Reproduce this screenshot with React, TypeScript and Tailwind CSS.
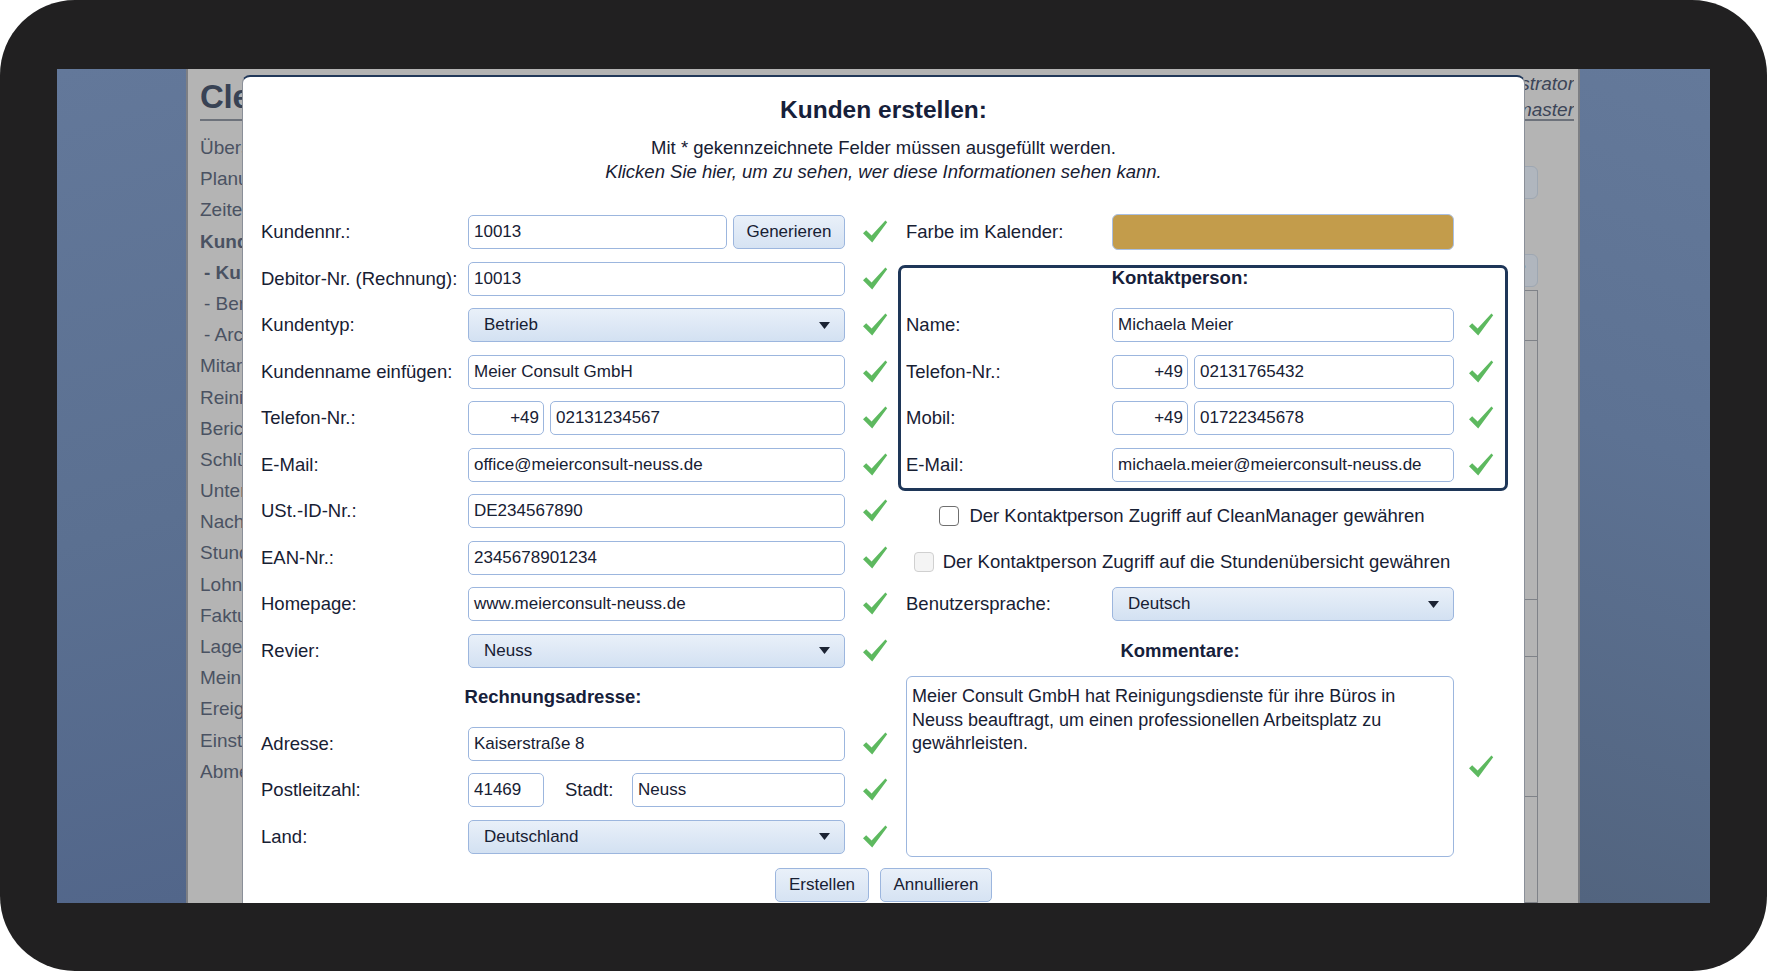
import React from "react";

const FONT = "font-['Liberation_Sans',Arial,Helvetica,sans-serif]";
const INK = "text-[#172033]";

function Check() {
  return (
    <svg viewBox="0 0 26 26" className="w-[26px] h-[26px] shrink-0">
      <path d="M1 14.2 L4.2 11.2 L9.6 16.6 L23.4 1.6 L25.2 3.2 L10.2 23.4 Z" fill="#5db95f" />
    </svg>
  );
}

function Field({ value, className = "" }: { value: string; className?: string }) {
  return (
    <div
      className={`h-[34px] shrink-0 flex items-center px-[5px] rounded-[5px] border border-[#9cb6de] bg-white text-[17px] ${INK} whitespace-nowrap overflow-hidden ${className}`}
    >
      {value}
    </div>
  );
}

function Prefix({ value }: { value: string }) {
  return (
    <div className={`h-[34px] w-[76px] shrink-0 flex items-center justify-end pr-[4px] rounded-[5px] border border-[#9cb6de] bg-white text-[17px] ${INK}`}>
      {value}
    </div>
  );
}

function Select({ value, className = "" }: { value: string; className?: string }) {
  return (
    <div
      className={`h-[34px] shrink-0 flex items-center justify-between pl-[15px] pr-[14px] rounded-[5px] border border-[#9cb6de] bg-gradient-to-b from-[#e9f0f9] to-[#d3e1f2] text-[17px] ${INK} ${className}`}
    >
      <span>{value}</span>
      <svg width="11" height="7" viewBox="0 0 11 7">
        <path d="M0 0H11L5.5 7Z" fill="#1b2333" />
      </svg>
    </div>
  );
}

function Label({ children, w = "w-[207px]" }: { children: React.ReactNode; w?: string }) {
  return <div className={`${w} shrink-0 text-[18.5px] ${INK} whitespace-nowrap`}>{children}</div>;
}

function LeftRow({ label, children, check = true }: { label: string; children: React.ReactNode; check?: boolean }) {
  return (
    <div className="h-[46.5px] flex items-center">
      <Label>{label}</Label>
      <div className="w-[377px] shrink-0 flex items-center">{children}</div>
      <div className="ml-[17px] w-[26px]">{check && <Check />}</div>
    </div>
  );
}

function ContactRow({ label, children }: { label: string; children: React.ReactNode }) {
  return (
    <div className="h-[46.5px] flex items-center pl-[5px]">
      <Label w="w-[206px]">{label}</Label>
      <div className="w-[342px] shrink-0 flex items-center">{children}</div>
      <div className="ml-[14px]">
        <Check />
      </div>
    </div>
  );
}

function Box({ disabled = false }: { disabled?: boolean }) {
  return (
    <div
      className={`w-[20px] h-[20px] shrink-0 rounded-[4px] border ${
        disabled ? "border-[#d0d0d0] bg-[#f4f4f4]" : "border-[#6f6f6f] bg-white"
      }`}
    />
  );
}

function BlueButton({ children, className = "" }: { children: React.ReactNode; className?: string }) {
  return (
    <div
      className={`h-[34px] shrink-0 flex items-center justify-center rounded-[5px] border border-[#9cb6de] bg-gradient-to-b from-[#e9f0f9] to-[#d6e3f3] text-[17px] ${INK} ${className}`}
    >
      {children}
    </div>
  );
}

const MENU: { text: string; bold?: boolean; sub?: boolean }[] = [
  { text: "Übersicht" },
  { text: "Planung" },
  { text: "Zeiterfassung" },
  { text: "Kunden", bold: true },
  { text: "- Kunden", bold: true, sub: true },
  { text: "- Bereiche", sub: true },
  { text: "- Archiv", sub: true },
  { text: "Mitarbeiter" },
  { text: "Reinigungspläne" },
  { text: "Berichte" },
  { text: "Schlüssel" },
  { text: "Unterlagen" },
  { text: "Nachrichten" },
  { text: "Stundenübersicht" },
  { text: "Lohnabrechnung" },
  { text: "Fakturierung" },
  { text: "Lager" },
  { text: "Mein Konto" },
  { text: "Ereignisse" },
  { text: "Einstellungen" },
  { text: "Abmelden" },
];

function AppPanel() {
  return (
    <div className="w-[1394px] shrink-0 h-full bg-[#b4b4b4] border-x-2 border-[#7d7f84] pl-[12px] pr-[4px] flex flex-col">
      {/* header: product name left, signed-in user right */}
      <div className="h-[50px] flex justify-between items-start">
        <div className="mt-[8px] w-[42px] overflow-hidden whitespace-nowrap h-[40px] leading-[40px] text-[33px] font-bold text-[#384254] tracking-[-0.3px]">
          CleanManager
        </div>
        <div className="pt-[2px] w-[50px] overflow-hidden flex flex-col items-end italic text-[19px] leading-[26px] text-[#3c4557] whitespace-nowrap">
          <div className="flex justify-end w-full">
            <span className="shrink-0">Administrator</span>
          </div>
          <div className="flex justify-end w-full">
            <span className="shrink-0">Cleanmaster</span>
          </div>
        </div>
      </div>
      <div className="h-[2px] bg-[#6d727b]" />
      <div className="flex-1 flex justify-between">
        <div className="mt-[11px] w-[42px] overflow-hidden flex flex-col">
          {MENU.map((m) => (
            <div
              key={m.text}
              className={`h-[31.2px] leading-[31.2px] whitespace-nowrap text-[19px] text-[#4a5262] ${
                m.bold ? "font-bold text-[#3a4354]" : ""
              } ${m.sub ? "pl-[4px]" : ""}`}
            >
              {m.text}
            </div>
          ))}
        </div>
        <div className="w-[420px] mr-[36px] flex flex-col items-end">
          <div className="mt-[45px] h-[33px] w-[160px] rounded-[6px] border border-[#9ea7b2] bg-[#b0b6be]" />
          <div className="mt-[55px] h-[33px] w-[160px] rounded-[6px] border border-[#9ea7b2] bg-[#b0b6be] flex items-center justify-end pr-[11px] text-[#3c4557] font-bold text-[18px]">
            ?
          </div>
          <div className="mt-[3px] w-full flex-1 border border-[#7f8288] flex flex-col">
            <div className="h-[50px] border-b border-[#7f8288]" />
            <div className="h-[259px] border-b border-[#7f8288]" />
            <div className="h-[57px] border-b border-[#7f8288]" />
            <div className="h-[140px] border-b border-[#7f8288]" />
          </div>
        </div>
      </div>
    </div>
  );
}

function Dialog() {
  return (
    <div className="absolute left-[185px] top-[6px] w-[1283px] h-[860px] bg-white rounded-t-[8px] border-t-2 border-x border-t-[#21385a] border-x-[#8a8f98]">
      <div className="pt-[18px] h-[48px] text-center text-[24.5px] leading-[30px] font-bold text-[#16203a]">
        Kunden erstellen:
      </div>
      <div className={`mt-[11px] text-center text-[18.5px] leading-[24px] ${INK}`}>
        <div>Mit * gekennzeichnete Felder müssen ausgefüllt werden.</div>
        <div className="italic">Klicken Sie hier, um zu sehen, wer diese Informationen sehen kann.</div>
      </div>

      <div className="mt-[24.75px] pl-[18px] flex gap-[11px]">
        {/* left column */}
        <div className="w-[626px] shrink-0 flex flex-col">
          <LeftRow label="Kundennr.:">
            <Field value="10013" className="w-[259px]" />
            <BlueButton className="ml-[6px] w-[112px]">Generieren</BlueButton>
          </LeftRow>
          <LeftRow label="Debitor-Nr. (Rechnung):">
            <Field value="10013" className="w-full" />
          </LeftRow>
          <LeftRow label="Kundentyp:">
            <Select value="Betrieb" className="w-full" />
          </LeftRow>
          <LeftRow label="Kundenname einfügen:">
            <Field value="Meier Consult GmbH" className="w-full" />
          </LeftRow>
          <LeftRow label="Telefon-Nr.:">
            <Prefix value="+49" />
            <Field value="02131234567" className="ml-[6px] w-[295px]" />
          </LeftRow>
          <LeftRow label="E-Mail:">
            <Field value="office@meierconsult-neuss.de" className="w-full" />
          </LeftRow>
          <LeftRow label="USt.-ID-Nr.:">
            <Field value="DE234567890" className="w-full" />
          </LeftRow>
          <LeftRow label="EAN-Nr.:">
            <Field value="2345678901234" className="w-full" />
          </LeftRow>
          <LeftRow label="Homepage:">
            <Field value="www.meierconsult-neuss.de" className="w-full" />
          </LeftRow>
          <LeftRow label="Revier:">
            <Select value="Neuss" className="w-full" />
          </LeftRow>
          <div className="h-[46.5px] flex items-center">
            <div className="w-[584px] text-center font-bold text-[18.5px] text-[#16203a]">Rechnungsadresse:</div>
          </div>
          <LeftRow label="Adresse:">
            <Field value="Kaiserstraße 8" className="w-full" />
          </LeftRow>
          <LeftRow label="Postleitzahl:">
            <Field value="41469" className="w-[76px]" />
            <div className={`ml-[21px] text-[18.5px] ${INK}`}>Stadt:</div>
            <Field value="Neuss" className="ml-auto w-[213px]" />
          </LeftRow>
          <LeftRow label="Land:">
            <Select value="Deutschland" className="w-full" />
          </LeftRow>
        </div>

        {/* right column */}
        <div className="w-[610px] shrink-0 flex flex-col">
          <div className="h-[46.5px] flex items-center pl-[8px]">
            <Label w="w-[206px]">Farbe im Kalender:</Label>
            <div className="w-[342px] h-[36px] rounded-[6px] border border-[#a9bfe2] bg-[#c39c4b]" />
          </div>

          <div className="mt-[9.75px] border-[3px] border-[#1e3658] rounded-[7px]">
            <div className="h-[33.75px] pl-[5px]">
              <div className="w-[548px] text-center font-bold text-[18.5px] leading-[20px] text-[#16203a]">
                Kontaktperson:
              </div>
            </div>
            <ContactRow label="Name:">
              <Field value="Michaela Meier" className="w-full" />
            </ContactRow>
            <ContactRow label="Telefon-Nr.:">
              <Prefix value="+49" />
              <Field value="02131765432" className="ml-[6px] w-[260px]" />
            </ContactRow>
            <ContactRow label="Mobil:">
              <Prefix value="+49" />
              <Field value="01722345678" className="ml-[6px] w-[260px]" />
            </ContactRow>
            <ContactRow label="E-Mail:">
              <Field value="michaela.meier@meierconsult-neuss.de" className="w-full" />
            </ContactRow>
          </div>

          <div className="h-[43.5px] pt-[7px] pl-[8px] flex items-center">
            <div className="w-[552px] flex items-center justify-center gap-[10px]">
              <Box />
              <span className={`text-[18.5px] ${INK} whitespace-nowrap`}>Der Kontaktperson Zugriff auf CleanManager gewähren</span>
            </div>
          </div>
          <div className="h-[46.5px] pt-[9px] pl-[8px] flex items-center">
            <div className="w-[552px] flex items-center justify-center gap-[9px]">
              <Box disabled />
              <span className={`text-[18.5px] ${INK} whitespace-nowrap`}>
                Der Kontaktperson Zugriff auf die Stundenübersicht gewähren
              </span>
            </div>
          </div>
          <div className="h-[46.5px] flex items-center pl-[8px]">
            <Label w="w-[206px]">Benutzersprache:</Label>
            <Select value="Deutsch" className="w-[342px]" />
          </div>
          <div className="h-[46.5px] flex items-center pl-[8px]">
            <div className="w-[548px] text-center font-bold text-[18.5px] text-[#16203a]">Kommentare:</div>
          </div>
          <div className="h-[186px] flex items-center pl-[8px]">
            <div
              className={`w-[548px] h-[181px] rounded-[6px] border border-[#9cb6de] bg-white px-[5px] pt-[8px] text-[18px] leading-[23.5px] ${INK}`}
            >
              Meier Consult GmbH hat Reinigungsdienste für ihre Büros in Neuss beauftragt, um einen professionellen
              Arbeitsplatz zu gewährleisten.
            </div>
            <div className="ml-[14px]">
              <Check />
            </div>
          </div>
        </div>
      </div>

      <div className="mt-[8.25px] flex justify-center gap-[11px]">
        <BlueButton className="w-[94px]">Erstellen</BlueButton>
        <BlueButton className="w-[112px]">Annullieren</BlueButton>
      </div>
    </div>
  );
}

export default function App() {
  return (
    <div className={`w-[1767px] h-[971px] bg-white ${FONT}`}>
      <div className="w-full h-full rounded-[75px] bg-[#212021] pt-[69px] pl-[57px]">
        <div className="relative w-[1653px] h-[834px] overflow-hidden flex">
          <div className="w-[129px] shrink-0 h-full bg-[linear-gradient(165deg,#63789a_0%,#5b7091_55%,#52668a_100%)]" />
          <AppPanel />
          <div className="flex-1 h-full bg-[linear-gradient(200deg,#64799a_0%,#5d7293_45%,#52647f_100%)]" />
          <Dialog />
        </div>
      </div>
    </div>
  );
}
